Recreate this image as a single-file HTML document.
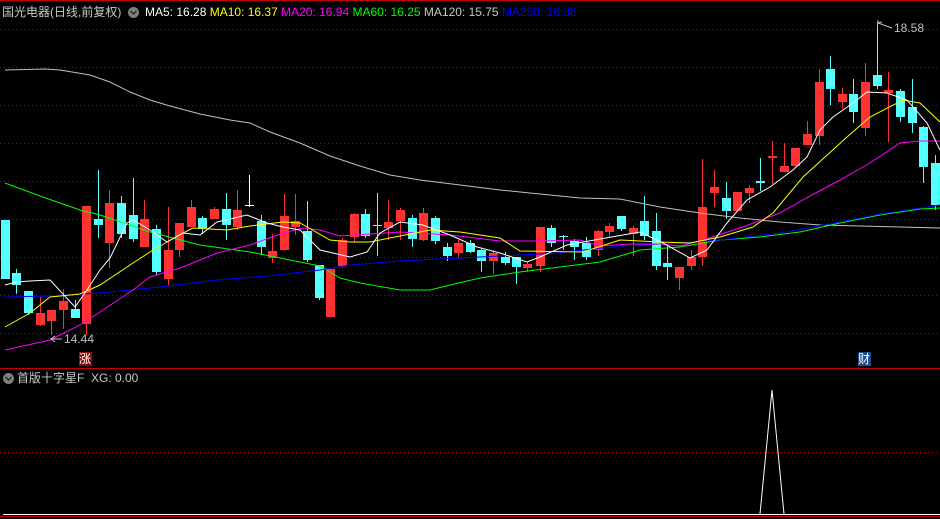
<!DOCTYPE html>
<html><head><meta charset="utf-8"><style>
html,body{margin:0;padding:0;background:#000;width:940px;height:519px;overflow:hidden}
.t{position:absolute;font-family:"Liberation Sans","Noto Sans CJK SC",sans-serif;font-size:12px;white-space:nowrap;line-height:14px}
</style></head><body>
<svg id="s" width="940" height="519" style="position:absolute;left:0;top:0" xmlns="http://www.w3.org/2000/svg">
<line x1="0" y1="0.5" x2="940" y2="0.5" stroke="#c00000"/>
<line x1="21.5" y1="0" x2="21.5" y2="3" stroke="#c00000"/>
<g stroke="#8a1010" stroke-dasharray="1,3">
<line x1="0" y1="29.5" x2="940" y2="29.5"/><line x1="0" y1="67.5" x2="940" y2="67.5"/>
<line x1="0" y1="105.5" x2="940" y2="105.5"/><line x1="0" y1="143.5" x2="940" y2="143.5"/>
<line x1="0" y1="181.5" x2="940" y2="181.5"/><line x1="0" y1="219.5" x2="940" y2="219.5"/>
<line x1="0" y1="257.5" x2="940" y2="257.5"/><line x1="0" y1="295.5" x2="940" y2="295.5"/>
<line x1="0" y1="333.5" x2="940" y2="333.5"/><line x1="0" y1="452.5" x2="940" y2="452.5" stroke="#c00000"/>
</g>
<line x1="0" y1="368.5" x2="940" y2="368.5" stroke="#c00000"/>
<line x1="0" y1="516.5" x2="940" y2="516.5" stroke="#c00000"/>
<g id="c"></g>
<g fill="none" stroke-width="1">
<polyline stroke="#c0c0c0" points="5,70 45,69 60,70 90,75 110,82 130,92 150,100 170,106 200,114 230,120 250,123 270,132 300,143 330,156 360,166 390,175 420,180 460,185 500,190 540,194 580,198 620,199 660,207 700,213 740,218 780,222 820,225 860,226 900,227 940,228"/>
<polyline stroke="#00ff00" points="5,183 40,196 80,210 100,215 150,232 200,245 250,252 300,262 320,266 340,278 360,283 400,290 430,290 450,285 480,278 520,272 560,267 600,262 640,250 680,247 720,240 760,237 800,232 840,223 880,215 920,209 940,208"/>
<polyline stroke="#0000ff" points="5,297 50,296 100,293 160,287 217,280 267,276 320,270 350,265 400,261 440,259 480,257 520,255 557,253 620,246 680,243 720,240 780,233 840,222 880,214 940,205"/>
<polyline stroke="#ff00ff" points="5,350 50,340 80,325 100,312 133,290 150,277 183,267 217,253 250,245 283,233 303,228 320,230 340,236 400,232 450,235 500,241 540,241 580,240 600,246 630,244 660,244 680,246 700,241 740,228 780,213 810,196 840,180 870,163 900,143 920,141 940,141"/>
<polyline stroke="#ffff00" points="5,327 30,313 50,297 80,294 100,285 133,263 150,252 167,242 183,233 193,228 227,230 250,226 283,222 300,223 330,240 350,242 370,242 400,236 430,230 460,232 500,238 520,251 583,252 620,240 660,242 690,243 720,237 753,227 773,213 803,177 847,137 870,117 903,100 920,103 940,122"/>
<polyline stroke="#ffffff" points="5,285 16,282 30,281 50,280 75,307 87,290 100,270 110,258 127,223 133,220 150,230 167,242 183,233 200,235 217,222 247,215 267,223 283,227 300,230 320,250 350,257 367,252 380,233 400,222 423,225 450,235 477,247 500,253 527,262 540,257 567,245 600,239 640,232 663,243 690,258 707,250 727,223 747,200 770,187 793,170 807,157 820,130 833,117 853,103 867,92 887,93 907,100 927,123 940,150"/>
</g>
<line x1="3" y1="514.5" x2="940" y2="514.5" stroke="#fff"/>
<polyline points="760,514 772,390 784,514" fill="none" stroke="#fff"/>
<polyline points="51,339 55,336 51,339 55,342 51,339 62,339" fill="none" stroke="#c0c0c0"/>
<polyline points="878,20 878,23 882,22 878,23 892,28" fill="none" stroke="#c0c0c0"/>
<circle cx="133.5" cy="12.5" r="5.5" fill="#808080"/><polyline points="130.5,11 133.5,14 136.5,11" fill="none" stroke="#222" stroke-width="1.3"/>
<circle cx="8.5" cy="378.5" r="5.5" fill="#808080"/><polyline points="5.5,377 8.5,380 11.5,377" fill="none" stroke="#222" stroke-width="1.3"/>
<rect x="79" y="352" width="13" height="14" fill="#8b0a0a"/>
<rect x="858" y="352" width="13" height="14" fill="#1c4b8c"/>
</svg>
<div class="t" style="left:2px;top:5px;color:#c8c8c8;font-size:12px">国光电器(日线,前复权)</div>
<div class="t" style="left:145px;top:5px"><span style="color:#fff">MA5: 16.28</span> <span style="color:#ffff00">MA10: 16.37</span> <span style="color:#ff00ff">MA20: 16.94</span> <span style="color:#00ff00">MA60: 16.25</span> <span style="color:#c8c8c8">MA120: 15.75</span> <span style="color:#0000ff">MA250: 16.38</span></div>
<div class="t" style="left:64px;top:332px;color:#c0c0c0">14.44</div>
<div class="t" style="left:894px;top:21px;color:#c0c0c0">18.58</div>
<div class="t" style="left:79px;top:352px;color:#fff;font-size:12px">涨</div>
<div class="t" style="left:858px;top:352px;color:#fff;font-size:12px">财</div>
<div class="t" style="left:17px;top:371px;color:#c8c8c8">首版十字星F&nbsp; XG: 0.00</div>
<script>
var d=[[5.5,'c',220,279,220,279],[16.5,'c',273,285,269,294],[28.5,'c',291,313,291,315],[40.5,'r',313,325,297,326],[51.5,'r',310,321,310,335],[63.5,'r',301,310,289,329],[75.5,'c',309,318,300,318],[86.5,'r',206,324,206,335],[98.5,'c',219,225,170,238],[109.5,'r',203,243,190,268],[121.5,'c',203,234,196,238],[133.5,'c',215,239,178,242],[144.5,'r',219,247,200,247],[156.5,'c',229,272,225,275],[168.5,'r',250,279,207,285],[179.5,'r',223,250,223,257],[191.5,'r',207,227,200,227],[202.5,'c',218,228,216,234],[214.5,'r',209,219,207,219],[226.5,'c',209,225,193,240],[237.5,'r',210,227,190,230],[249,'w',205,206,175,207],[261.5,'c',221,247,215,255],[272.5,'r',251,258,234,263],[284.5,'r',216,250,194,250],[295.5,'r',221,227,194,235],[307.5,'c',231,260,201,262],[319.5,'c',265,298,265,300],[330.5,'r',269,317,268,317],[342.5,'r',240,266,238,268],[354.5,'r',214,237,213,242],[365.5,'c',214,236,209,238],[377.5,'x',225,226,193,256],[388.5,'r',222,228,200,240],[400.5,'r',210,221,208,240],[412.5,'c',218,239,215,247],[423.5,'r',213,240,208,241],[435.5,'c',218,241,216,244],[447.5,'c',247,256,243,261],[458.5,'r',243,253,240,258],[470,'c',243,252,240,253],[481.5,'c',250,261,249,272],[493.5,'r',253,261,250,274],[505.5,'c',257,263,252,265],[516.5,'c',257,267,257,284],[527.5,'r',264,268,262,272],[540.5,'r',227,266,227,272],[551.5,'c',228,243,225,247],[563.5,'x',236,237,235,250],[574.5,'c',241,247,239,260],[586.5,'c',243,257,237,260],[598.5,'r',231,250,230,256],[609.5,'r',226,232,223,237],[621.5,'c',216,229,216,231],[633.5,'r',228,234,226,256],[644.5,'c',221,236,196,240],[656.5,'c',231,266,213,270],[667.5,'c',263,267,246,280],[679.5,'r',267,278,267,290],[691.5,'r',257,266,250,270],[702.5,'r',207,257,159,266],[714.5,'r',187,193,170,207],[726.5,'c',198,211,182,219],[737.5,'r',192,211,192,212],[749.5,'r',188,193,185,203],[760.5,'c',181,183,158,191],[772.5,'r',156,158,141,184],[784.5,'r',166,172,143,172],[795.5,'r',148,166,148,168],[807.5,'r',134,145,121,145],[819.5,'r',82,136,69,145],[830.5,'c',69,89,56,105],[842.5,'r',94,102,88,109],[853.5,'c',94,112,79,123],[865.5,'r',82,128,63,136],[877.5,'c',75,86,23,89],[888.5,'r',90,93,72,142],[900.5,'c',91,117,89,122],[912.5,'c',107,123,79,133],[923.5,'c',127,167,126,183],[935.5,'c',163,205,155,210]];
var h='';d.forEach(function(a){var x=a[0],t=a[1],col=t=='r'?'#ff3232':(t=='w'?'#ffffff':'#54ffff');var xm=Math.floor(x)+0.5;
h+='<line x1="'+xm+'" y1="'+a[4]+'" x2="'+xm+'" y2="'+a[5]+'" stroke="'+col+'"/>';
if(t=='w'||t=='x'){h+='<line x1="'+(xm-4.5)+'" y1="'+(a[2]+0.5)+'" x2="'+(xm+4.5)+'" y2="'+(a[2]+0.5)+'" stroke="'+col+'"/>';}
else{h+='<rect x="'+(xm-4.5)+'" y="'+a[2]+'" width="9" height="'+Math.max(1,a[3]-a[2])+'" fill="'+col+'"/>';}});
document.getElementById('c').innerHTML=h;
</script>
</body></html>
